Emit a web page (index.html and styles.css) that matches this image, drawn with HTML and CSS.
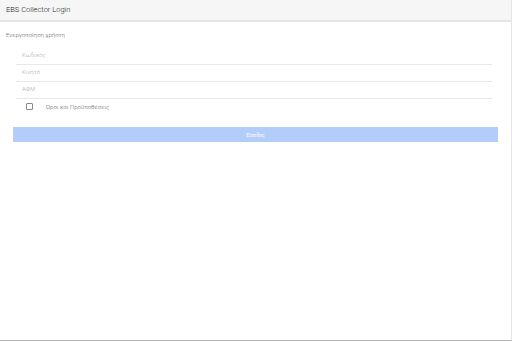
FILE: index.html
```html
<!DOCTYPE html>
<html lang="el">

<head>
    <meta charset="UTF-8">
    <meta name="viewport" content="width=device-width, initial-scale=1.0">
    <title>EBS Collector Login</title>
    <link rel="stylesheet" href="styles.css">
</head>

<body>
    <div id="app">
        <div id="toolbar">EBS Collector Login</div>
        <div id="content">
            <p class="subtitle">Ενεργοποίηση χρήστη</p>
            <div class="fields">
                <input type="text" class="field" placeholder="Κωδικός">
                <input type="text" class="field" placeholder="Κινητό">
                <input type="text" class="field" placeholder="ΑΦΜ">
            </div>
            <label class="terms">
                <span class="box"></span>
                <span>Όροι και Προϋποθέσεις</span>
            </label>
            <button class="login" disabled>Είσοδος</button>
        </div>
    </div>
</body>

</html>
```

FILE: styles.css
```css
html, body {
    margin: 0;
    height: 100%;
}

body {
    font-family: Roboto, "Liberation Sans", sans-serif;
    font-weight: 300;
    background-color: #fff;
}

#app {
    box-sizing: border-box;
    height: 341px;
    border-right: 1px solid #e6e6e6;
    border-bottom: 1px solid #b5b5b5;
}

/* top bar */
#toolbar {
    height: 20px;
    line-height: 20px;
    padding-left: 6px;
    font-size: 7.5px;
    font-weight: 300;
    color: #222;
    background-color: #f6f6f6;
    border-bottom: 2px solid #e6e6e6;
}

#content {
    padding: 0 13px 0 13px;
}

.subtitle {
    margin: 9px 0 0 -7px;
    font-size: 6px;
    color: #666;
}

.fields {
    display: flex;
    flex-direction: column;
    margin: 10px 6px 0 3px;
}

.field {
    height: 13px;
    padding: 0 0 3px 6px;
    border: none;
    border-bottom: 1px solid #e8e8e8;
    font-family: inherit;
    font-weight: 300;
    font-size: 6px;
    color: #333;
    outline: none;
    background: transparent;
}

.field::placeholder {
    color: #aaa;
}

.terms {
    display: flex;
    align-items: center;
    height: 13px;
    margin-top: 1px;
    font-size: 6px;
    color: #666;
}

.terms .box {
    box-sizing: border-box;
    width: 7px;
    height: 7px;
    margin: 0 13px 0 13px;
    border: 1px solid #888;
    border-radius: 1px;
}

.login {
    display: block;
    width: 485px;
    height: 15px;
    margin-top: 14px;
    padding: 0;
    border: none;
    background-color: #b3cdfa;
    color: #fff;
    font-family: inherit;
    font-weight: 400;
    font-size: 5px;
}
```
